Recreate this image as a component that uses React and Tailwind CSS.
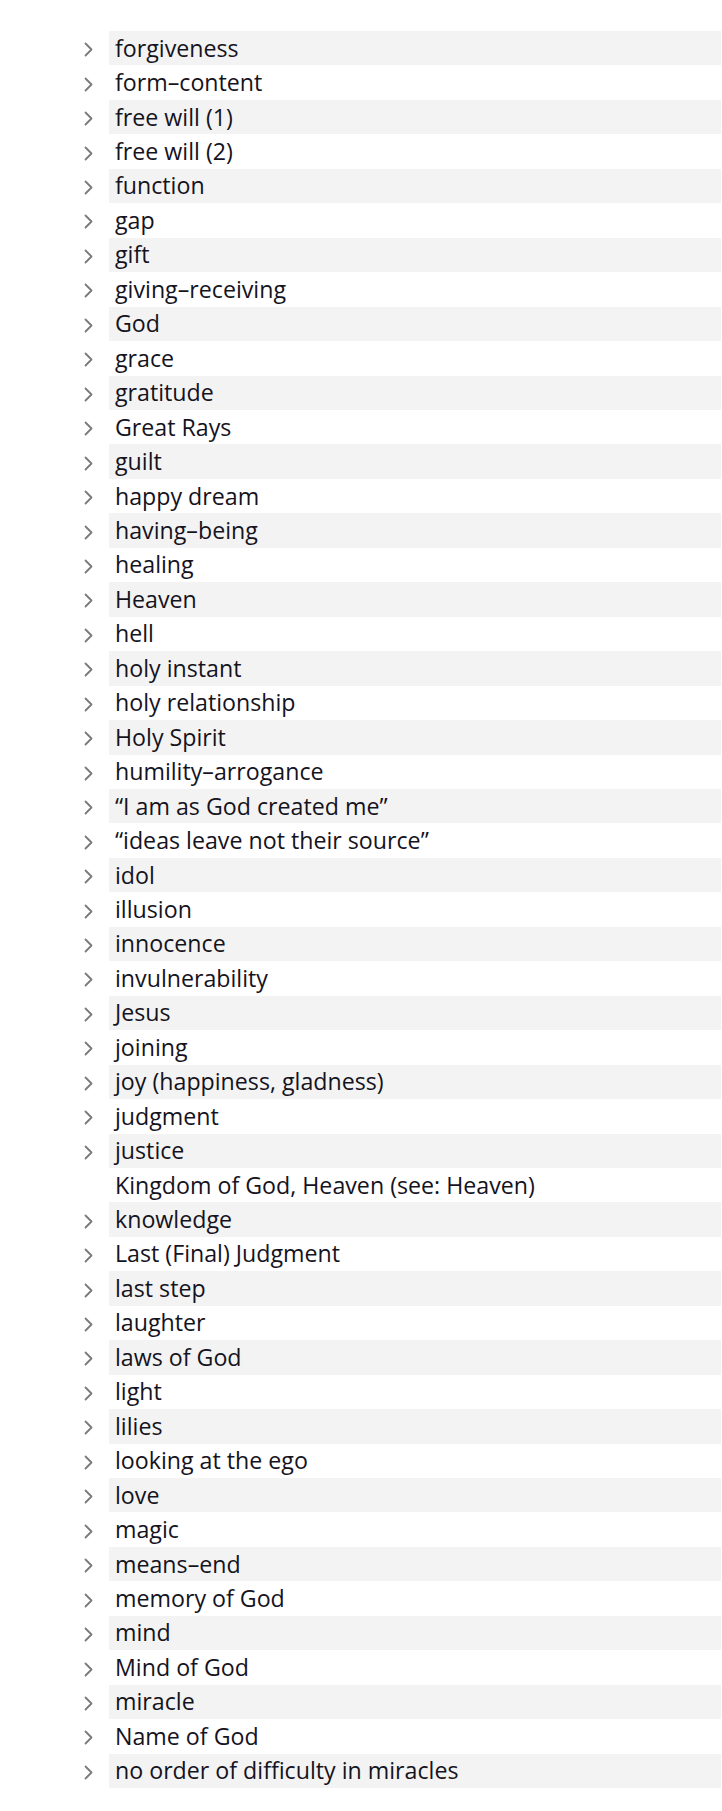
import React from "react";

const items = [
  "forgiveness",
  "form–content",
  "free will (1)",
  "free will (2)",
  "function",
  "gap",
  "gift",
  "giving–receiving",
  "God",
  "grace",
  "gratitude",
  "Great Rays",
  "guilt",
  "happy dream",
  "having–being",
  "healing",
  "Heaven",
  "hell",
  "holy instant",
  "holy relationship",
  "Holy Spirit",
  "humility–arrogance",
  "“I am as God created me”",
  "“ideas leave not their source”",
  "idol",
  "illusion",
  "innocence",
  "invulnerability",
  "Jesus",
  "joining",
  "joy (happiness, gladness)",
  "judgment",
  "justice",
  "Kingdom of God, Heaven (see: Heaven)",
  "knowledge",
  "Last (Final) Judgment",
  "last step",
  "laughter",
  "laws of God",
  "light",
  "lilies",
  "looking at the ego",
  "love",
  "magic",
  "means–end",
  "memory of God",
  "mind",
  "Mind of God",
  "miracle",
  "Name of God",
  "no order of difficulty in miracles",
];

function Chevron() {
  return (
    <svg width="11" height="15" viewBox="0 0 11 15" className="block">
      <polyline
        points="2.5,1.5 8.5,7.5 2.5,13.5"
        fill="none"
        stroke="#7a7a7a"
        strokeWidth="1.8"
        strokeLinecap="round"
        strokeLinejoin="round"
      />
    </svg>
  );
}

export default function App() {
  return (
    <div
      className="w-[722px] h-[1811px] bg-white pt-[31px]"
      style={{ fontFamily: '"Open Sans", "Noto Sans", sans-serif' }}
    >
      {items.map((t, i) => {
        const noChevron = t.startsWith("Kingdom");
        return (
          <div key={i} className="flex h-[34.46px] items-stretch">
            <div className="w-[109px] shrink-0 flex items-center pl-[83px] pt-[3px]">
              {!noChevron && <Chevron />}
            </div>
            <div
              className={
                "flex-1 mr-[1px] flex items-center pl-[6px] text-[23.2px] leading-none text-[#15131d] " +
                (i % 2 === 0 ? "bg-[#f3f3f3]" : "bg-white")
              }
            >
              {t}
            </div>
          </div>
        );
      })}
    </div>
  );
}
